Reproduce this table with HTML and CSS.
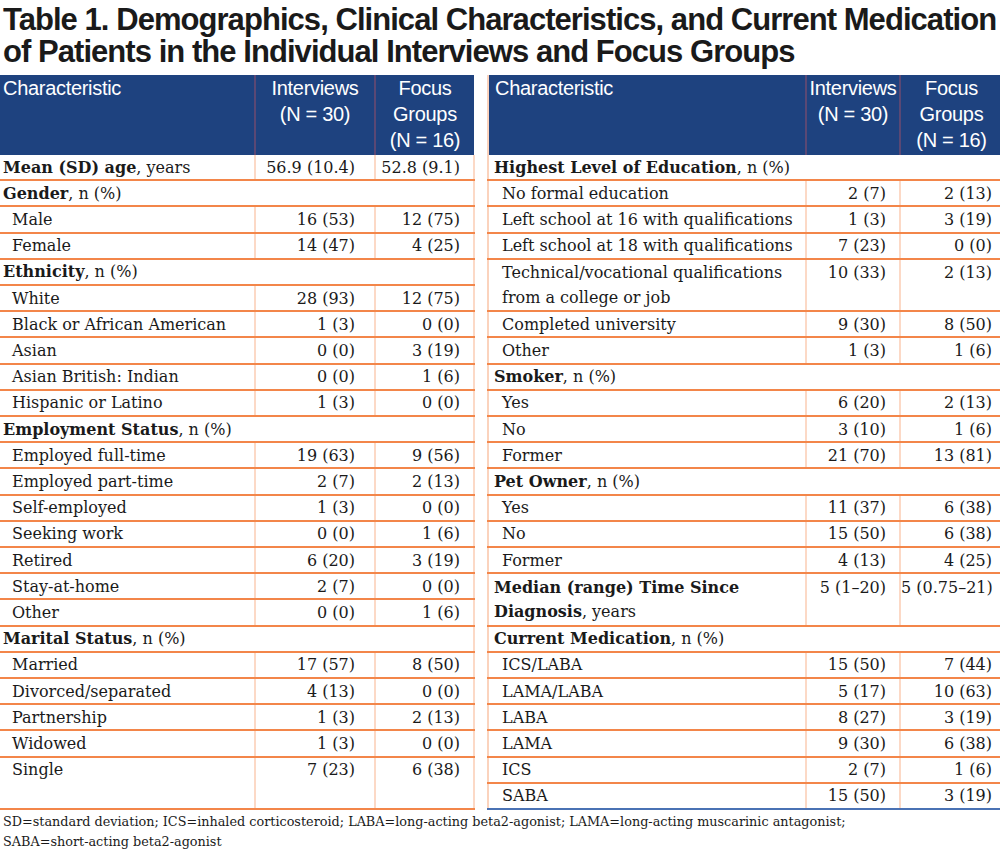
FILE: index.html
```html
<!DOCTYPE html>
<html>
<head>
<meta charset="utf-8">
<link rel="stylesheet" href="styles.css">
</head>
<body>
<h1 class="title">Table 1. Demographics, Clinical Characteristics, and Current Medication<br>of Patients in the Individual Interviews and Focus Groups</h1>
<div class="tables">
  <table class="tbl tbl-left">
    <colgroup><col class="c1l"><col class="c2l"><col class="c3l"></colgroup>
    <thead>
      <tr><th class="hchar">Characteristic</th><th>Interviews<br>(N = 30)</th><th>Focus<br>Groups<br>(N = 16)</th></tr>
    </thead>
    <tbody>
      <tr><td class="cat"><b>Mean (SD) age</b>, years</td><td class="num">56.9 (10.4)</td><td class="num">52.8 (9.1)</td></tr>
      <tr><td class="cat" colspan="3"><b>Gender</b>, n (%)</td></tr>
      <tr><td class="item">Male</td><td class="num">16 (53)</td><td class="num">12 (75)</td></tr>
      <tr><td class="item">Female</td><td class="num">14 (47)</td><td class="num">4 (25)</td></tr>
      <tr><td class="cat" colspan="3"><b>Ethnicity</b>, n (%)</td></tr>
      <tr><td class="item">White</td><td class="num">28 (93)</td><td class="num">12 (75)</td></tr>
      <tr><td class="item">Black or African American</td><td class="num">1 (3)</td><td class="num">0 (0)</td></tr>
      <tr><td class="item">Asian</td><td class="num">0 (0)</td><td class="num">3 (19)</td></tr>
      <tr><td class="item">Asian British: Indian</td><td class="num">0 (0)</td><td class="num">1 (6)</td></tr>
      <tr><td class="item">Hispanic or Latino</td><td class="num">1 (3)</td><td class="num">0 (0)</td></tr>
      <tr><td class="cat" colspan="3"><b>Employment Status</b>, n (%)</td></tr>
      <tr><td class="item">Employed full-time</td><td class="num">19 (63)</td><td class="num">9 (56)</td></tr>
      <tr><td class="item">Employed part-time</td><td class="num">2 (7)</td><td class="num">2 (13)</td></tr>
      <tr><td class="item">Self-employed</td><td class="num">1 (3)</td><td class="num">0 (0)</td></tr>
      <tr><td class="item">Seeking work</td><td class="num">0 (0)</td><td class="num">1 (6)</td></tr>
      <tr><td class="item">Retired</td><td class="num">6 (20)</td><td class="num">3 (19)</td></tr>
      <tr><td class="item">Stay-at-home</td><td class="num">2 (7)</td><td class="num">0 (0)</td></tr>
      <tr><td class="item">Other</td><td class="num">0 (0)</td><td class="num">1 (6)</td></tr>
      <tr><td class="cat" colspan="3"><b>Marital Status</b>, n (%)</td></tr>
      <tr><td class="item">Married</td><td class="num">17 (57)</td><td class="num">8 (50)</td></tr>
      <tr><td class="item">Divorced/separated</td><td class="num">4 (13)</td><td class="num">0 (0)</td></tr>
      <tr><td class="item">Partnership</td><td class="num">1 (3)</td><td class="num">2 (13)</td></tr>
      <tr><td class="item">Widowed</td><td class="num">1 (3)</td><td class="num">0 (0)</td></tr>
      <tr class="tall"><td class="item">Single</td><td class="num">7 (23)</td><td class="num">6 (38)</td></tr>
    </tbody>
  </table>
  <table class="tbl tbl-right">
    <colgroup><col class="c1r"><col class="c2r"><col class="c3r"></colgroup>
    <thead>
      <tr><th class="hchar">Characteristic</th><th>Interviews<br>(N = 30)</th><th>Focus<br>Groups<br>(N = 16)</th></tr>
    </thead>
    <tbody>
      <tr><td class="cat" colspan="3"><b>Highest Level of Education</b>, n (%)</td></tr>
      <tr><td class="item">No formal education</td><td class="num">2 (7)</td><td class="num">2 (13)</td></tr>
      <tr><td class="item">Left school at 16 with qualifications</td><td class="num">1 (3)</td><td class="num">3 (19)</td></tr>
      <tr><td class="item">Left school at 18 with qualifications</td><td class="num">7 (23)</td><td class="num">0 (0)</td></tr>
      <tr class="two"><td class="item">Technical/vocational qualifications<br>from a college or job</td><td class="num">10 (33)</td><td class="num">2 (13)</td></tr>
      <tr><td class="item">Completed university</td><td class="num">9 (30)</td><td class="num">8 (50)</td></tr>
      <tr><td class="item">Other</td><td class="num">1 (3)</td><td class="num">1 (6)</td></tr>
      <tr><td class="cat" colspan="3"><b>Smoker</b>, n (%)</td></tr>
      <tr><td class="item">Yes</td><td class="num">6 (20)</td><td class="num">2 (13)</td></tr>
      <tr><td class="item">No</td><td class="num">3 (10)</td><td class="num">1 (6)</td></tr>
      <tr><td class="item">Former</td><td class="num">21 (70)</td><td class="num">13 (81)</td></tr>
      <tr><td class="cat" colspan="3"><b>Pet Owner</b>, n (%)</td></tr>
      <tr><td class="item">Yes</td><td class="num">11 (37)</td><td class="num">6 (38)</td></tr>
      <tr><td class="item">No</td><td class="num">15 (50)</td><td class="num">6 (38)</td></tr>
      <tr><td class="item">Former</td><td class="num">4 (13)</td><td class="num">4 (25)</td></tr>
      <tr class="two"><td class="cat"><b>Median (range) Time Since<br>Diagnosis</b>, years</td><td class="num">5 (1–20)</td><td class="num num-tight">5 (0.75–21)</td></tr>
      <tr><td class="cat" colspan="3"><b>Current Medication</b>, n (%)</td></tr>
      <tr><td class="item">ICS/LABA</td><td class="num">15 (50)</td><td class="num">7 (44)</td></tr>
      <tr><td class="item">LAMA/LABA</td><td class="num">5 (17)</td><td class="num">10 (63)</td></tr>
      <tr><td class="item">LABA</td><td class="num">8 (27)</td><td class="num">3 (19)</td></tr>
      <tr><td class="item">LAMA</td><td class="num">9 (30)</td><td class="num">6 (38)</td></tr>
      <tr><td class="item">ICS</td><td class="num">2 (7)</td><td class="num">1 (6)</td></tr>
      <tr class="last"><td class="item">SABA</td><td class="num">15 (50)</td><td class="num">3 (19)</td></tr>
    </tbody>
  </table>
</div>
<p class="foot">SD=standard deviation; ICS=inhaled corticosteroid; LABA=long-acting beta2-agonist; LAMA=long-acting muscarinic antagonist;<br>SABA=short-acting beta2-agonist</p>
</body>
</html>
```
FILE: styles.css
```css
html, body {
  margin: 0;
  padding: 0;
  background: #ffffff;
}
body {
  width: 1000px;
  color: #1a1a1a;
  font-family: "DejaVu Serif", "Liberation Serif", serif;
}
.title {
  margin: 0;
  padding: 4px 0 0 3px;
  height: 75px;
  box-sizing: border-box;
  font-family: "Liberation Sans", Arial, sans-serif;
  font-weight: bold;
  font-size: 31px;
  line-height: 32px;
  color: #1a1a1a;
  letter-spacing: -0.95px;
  white-space: nowrap;
}
.tables {
  display: flex;
  align-items: flex-start;
  gap: 12px;
}
.tbl {
  border-collapse: collapse;
  table-layout: fixed;
  font-size: 16px;
}
.tbl-left { width: 474px; }
.tbl-right { width: 514px; border-left: 2px solid #fbd3bd; }
.c1l { width: 255px; }
.c2l { width: 120px; }
.c3l { width: 99px; }
.c1r { width: 318px; }
.c2r { width: 94px; }
.c3r { width: 102px; }

.tbl th {
  background: #1e427f;
  color: #ffffff;
  font-family: "Liberation Sans", Arial, sans-serif;
  font-weight: normal;
  font-size: 20px;
  line-height: 26px;
  height: 80px;
  padding: 0 1px;
  vertical-align: top;
  text-align: center;
  border-left: 2px solid #5a4874;
  letter-spacing: -0.3px;
}
.tbl th.hchar {
  text-align: left;
  padding-left: 3px;
  border-left: none;
}
.tbl-right th.hchar { padding-left: 6px; }

.tbl td {
  padding: 1.5px 0 0 0;
  line-height: 22.7px;
  border-bottom: 2px solid #f3864a;
  vertical-align: top;
  white-space: nowrap;
}
.tbl tr.two td { line-height: 24.45px; }
.tbl td + td {
  border-left: 2px solid #fcd9c6;
}
.tbl-left td:last-child { border-right: 2px solid #fcd9c6; }
.tbl-left td[colspan] { border-right: 2px solid #fcd9c6; }

.cat { padding-left: 3px !important; }
.item { padding-left: 12px !important; }
.tbl-right .cat { padding-left: 5px !important; }
.tbl-right .item { padding-left: 13px !important; }

.num { text-align: right; }
.tbl-left td.num { padding-right: 19px; }
.tbl-left td.num + td.num { padding-right: 13px; }
.tbl-right td.num { padding-right: 13px; }
.tbl-right td.num + td.num { padding-right: 10px; }
.tbl-right td.num-tight { padding-right: 10px; }

.tall td { height: 48.9px; }
.tbl-right tr.last td { border-bottom: 2px solid #4a72b4; }

.foot {
  margin: 0;
  padding: 2px 0 0 3px;
  font-size: 12.8px;
  line-height: 20px;
  color: #1a1a1a;
}
```
